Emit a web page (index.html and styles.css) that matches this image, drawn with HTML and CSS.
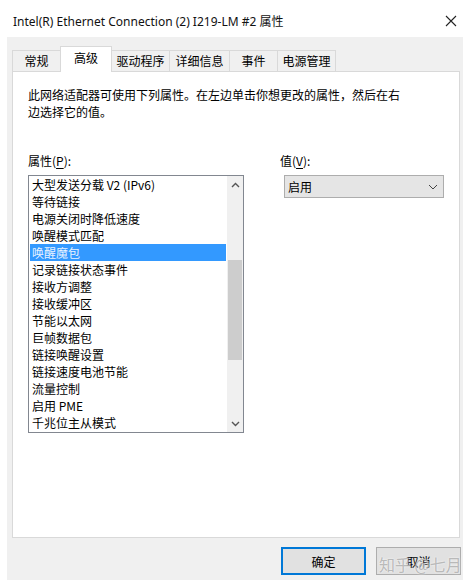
FILE: index.html
```html
<!DOCTYPE html>
<html lang="zh-CN">
<head>
  <meta charset="UTF-8" />
  <title>Intel(R) Ethernet Connection (2) I219-LM #2 属性</title>
  <link rel="stylesheet" href="styles.css">
</head>
<body>
  <div class="titlebar">
    <span class="title">Intel(R) Ethernet Connection (2) I219-LM #2 属性</span>
    <svg class="close" width="12" height="12" viewBox="0 0 12 12">
      <path d="M1 1 L11 11 M11 1 L1 11" stroke="#222" stroke-width="1.1" fill="none"/>
    </svg>
  </div>

  <div class="dialog">
    <div class="tabs">
      <div class="tab t-general">常规</div>
      <div class="tab t-advanced active">高级</div>
      <div class="tab t-driver">驱动程序</div>
      <div class="tab t-details">详细信息</div>
      <div class="tab t-events">事件</div>
      <div class="tab t-power">电源管理</div>
    </div>

    <div class="panel">
      <p class="desc">此网络适配器可使用下列属性。在左边单击你想更改的属性，然后在右<br>边选择它的值。</p>

      <div class="columns">
        <div class="col-left">
          <div class="label">属性(<u>P</u>):</div>
          <div class="listbox">
            <ul class="items">
              <li>大型发送分载 V2 (IPv6)</li>
              <li>等待链接</li>
              <li>电源关闭时降低速度</li>
              <li>唤醒模式匹配</li>
              <li class="selected">唤醒魔包</li>
              <li>记录链接状态事件</li>
              <li>接收方调整</li>
              <li>接收缓冲区</li>
              <li>节能以太网</li>
              <li>巨帧数据包</li>
              <li>链接唤醒设置</li>
              <li>链接速度电池节能</li>
              <li>流量控制</li>
              <li>启用 PME</li>
              <li>千兆位主从模式</li>
            </ul>
            <div class="scrollbar">
              <div class="arrow">
                <svg width="9" height="6" viewBox="0 0 9 6"><path d="M1 5 L4.5 1.5 L8 5" stroke="#555" stroke-width="1.4" fill="none"/></svg>
              </div>
              <div class="track">
                <div class="thumb"></div>
              </div>
              <div class="arrow">
                <svg width="9" height="6" viewBox="0 0 9 6"><path d="M1 1 L4.5 4.5 L8 1" stroke="#555" stroke-width="1.4" fill="none"/></svg>
              </div>
            </div>
          </div>
        </div>

        <div class="col-right">
          <div class="label">值(<u>V</u>):</div>
          <div class="select">
            <span>启用</span>
            <svg width="10" height="6" viewBox="0 0 10 6"><path d="M1 1 L5 5 L9 1" stroke="#444" stroke-width="1" fill="none"/></svg>
          </div>
        </div>
      </div>
    </div>

    <div class="buttons">
      <button class="btn default">确定</button>
      <button class="btn">取消<span class="watermark">知乎 @七月</span></button>
    </div>
  </div>
</body>
</html>
```

FILE: styles.css
```css
body {
  margin: 0;
  background: #ffffff;
  font-family: "Noto Sans CJK SC", "Noto Sans", sans-serif;
  font-size: 12px;
  color: #000;
}

.titlebar {
  height: 37px;
  display: flex;
  align-items: center;
  justify-content: space-between;
  padding: 4px 13px 0 13px;
  box-sizing: border-box;
}

.title {
  font-family: "Noto Sans", "Noto Sans CJK SC", sans-serif;
  font-size: 12px;
  color: #111;
}

.close {
  margin-right: 1px;
}

.dialog {
  background: #f0f0f0;
  margin: 0 8px 0 7px;
  padding: 9px 3px 0 5px;
  height: 543px;
  box-sizing: border-box;
}

.tabs {
  display: flex;
  align-items: flex-end;
  height: 25px;
  position: relative;
  z-index: 1;
}

.tab {
  height: 21px;
  line-height: 20px;
  padding: 0;
  text-align: center;
  white-space: nowrap;
  border: 1px solid #d9d9d9;
  border-bottom: none;
  margin-right: -1px;
  background: #f0f0f0;
  box-sizing: border-box;
}

.t-general { width: 49px; }
.t-advanced { width: 52px; }
.t-driver { width: 59px; }
.t-details { width: 61px; }
.t-events { width: 49px; }
.t-power { width: 59px; }

.tab.active {
  background: #ffffff;
  height: 26px;
  line-height: 22px;
  margin-bottom: -1px;
}

.panel {
  background: #ffffff;
  border: 1px solid #d9d9d9;
  height: 467px;
  padding: 0 15px;
  box-sizing: border-box;
}

.desc {
  margin: 14px 0 0 0;
  line-height: 17px;
}

.columns {
  display: flex;
  margin-top: 34px;
}

.label {
  height: 21px;
  line-height: 14px;
}

.label u {
  text-decoration-thickness: 1px;
  text-underline-offset: 2px;
}

.col-left {
  width: 216px;
}

.col-right {
  margin-left: 36px;
  width: 164px;
}

.listbox {
  display: flex;
  height: 258px;
  border: 1px solid #828790;
  box-sizing: border-box;
}

.items {
  list-style: none;
  margin: 0;
  padding: 0 1px 0 1px;
  flex: 1;
}

.items li {
  height: 17px;
  line-height: 17px;
  padding-left: 2px;
  white-space: nowrap;
}

.items li.selected {
  background: #3399ff;
  color: #e8f2ff;
}

.scrollbar {
  width: 16px;
  background: #f0f0f0;
  display: flex;
  flex-direction: column;
}

.arrow {
  height: 17px;
  display: flex;
  align-items: center;
  justify-content: center;
}

.track {
  flex: 1;
  padding-top: 67px;
}

.thumb {
  height: 100px;
  background: #cdcdcd;
  margin: 0 1px;
}

.select {
  margin-left: 4px;
  height: 23px;
  border: 1px solid #adadad;
  background: #e5e5e5;
  display: flex;
  align-items: center;
  justify-content: space-between;
  padding: 0 5px 0 3px;
  box-sizing: border-box;
}

.buttons {
  display: flex;
  justify-content: flex-end;
  gap: 10px;
  padding: 9px 0 0 0;
  margin-right: -1px;
}

.btn {
  position: relative;
  width: 85px;
  height: 28px;
  background: #e1e1e1;
  border: 1px solid #adadad;
  font-family: "Noto Sans CJK SC", sans-serif;
  font-size: 12px;
  color: #000;
  padding: 0;
}

.btn.default {
  border: 2px solid #0078d7;
}

.watermark {
  position: absolute;
  left: 2px;
  top: 4px;
  font-size: 16px;
  color: rgba(170, 170, 170, 0.8);
  white-space: nowrap;
  text-shadow: 0 0 2px #fff;
}
```
